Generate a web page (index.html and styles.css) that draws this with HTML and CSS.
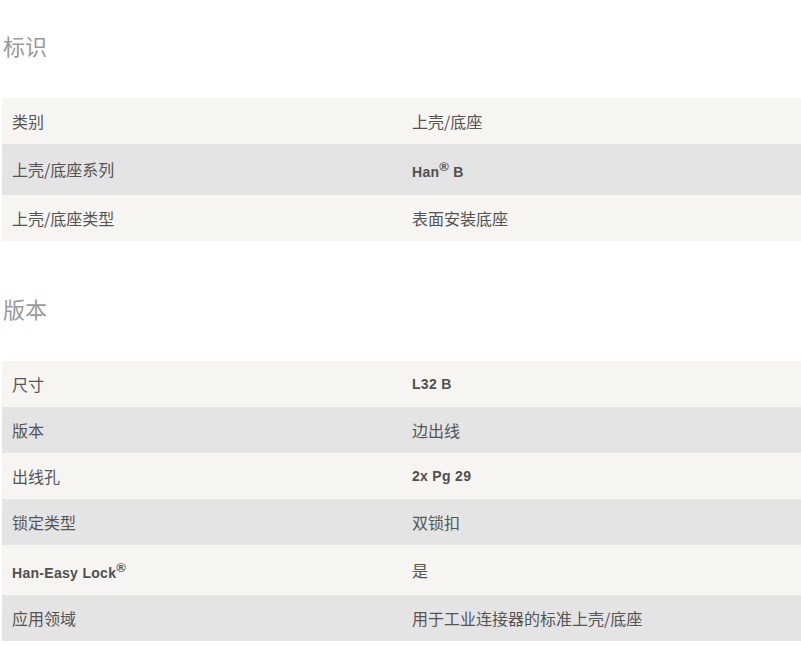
FILE: index.html
```html
<!DOCTYPE html>
<html lang="zh">
<head>
<meta charset="utf-8">
<title>标识</title>
<link rel="stylesheet" href="styles.css">
</head>
<body>
<div class="page">
  <h2 class="section-title first">标识</h2>
  <table class="spec">
    <tr><td>类别</td><td>上壳/底座</td></tr>
    <tr><td>上壳/底座系列</td><td class="b">Han<sup>®</sup> B</td></tr>
    <tr><td>上壳/底座类型</td><td>表面安装底座</td></tr>
  </table>
  <h2 class="section-title">版本</h2>
  <table class="spec">
    <tr><td>尺寸</td><td class="b">L32 B</td></tr>
    <tr><td>版本</td><td>边出线</td></tr>
    <tr><td>出线孔</td><td class="b">2x Pg 29</td></tr>
    <tr><td>锁定类型</td><td>双锁扣</td></tr>
    <tr><td class="b">Han-Easy Lock<sup>®</sup></td><td>是</td></tr>
    <tr><td>应用领域</td><td>用于工业连接器的标准上壳/底座</td></tr>
  </table>
</div>
</body>
</html>
```
FILE: styles.css
```css
html, body {
  margin: 0;
  padding: 0;
  background: #ffffff;
}
.page {
  padding-left: 2px;
  font-family: "Noto Sans CJK SC", "Liberation Sans", sans-serif;
  color: #555555;
}
.section-title {
  margin: 52px 0 38px 0;
  padding-left: 1px;
  font-size: 22px;
  line-height: 30px;
  font-weight: normal;
  color: #9a9a9a;
}
.section-title.first {
  margin-top: 30px;
}
.spec {
  width: 800px;
  border-collapse: collapse;
  table-layout: fixed;
}
.spec td {
  width: 50%;
  padding: 12px 10px;
  font-size: 16px;
  line-height: 22px;
  vertical-align: middle;
}
.spec tr:nth-child(odd) td {
  background: #f6f5f2;
}
.spec tr:nth-child(even) td {
  background: #e4e4e4;
}
.spec td.b {
  font-family: "Liberation Sans", "Noto Sans CJK SC", sans-serif;
  font-weight: bold;
  font-size: 14px;
  letter-spacing: 0.3px;
  color: #505050;
}
.spec sup {
  font-size: 13px;
  letter-spacing: 0;
}
```
